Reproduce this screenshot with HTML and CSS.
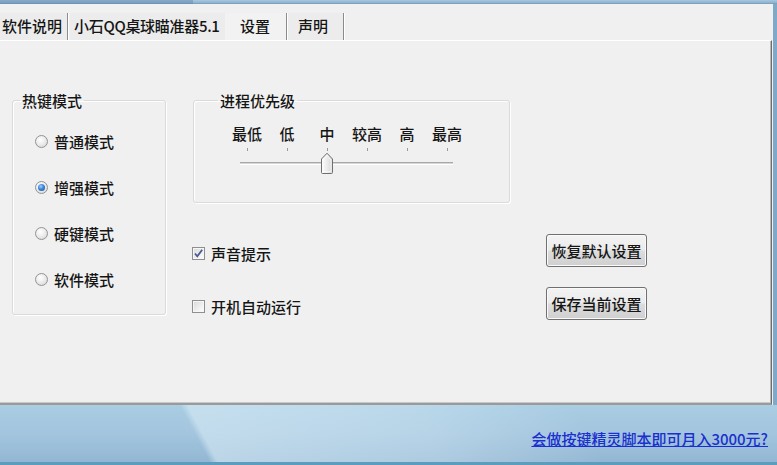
FILE: index.html
```html
<!DOCTYPE html>
<html>
<head>
<meta charset="utf-8">
<link rel="stylesheet" href="styles.css">
</head>
<body>
<div class="window">
  <div class="frame-top"></div>
  <div class="client">
    <div class="tabs">
      <div class="tab t1">软件说明</div>
      <div class="tab t2">小石QQ桌球瞄准器5.1</div>
      <div class="tab t3 active">设置</div>
      <div class="tab t4">声明</div>
    </div>
    <div class="panel">
      <fieldset class="group hotkey">
        <legend>热键模式</legend>
        <div class="radio"><span class="rb"></span>普通模式</div>
        <div class="radio"><span class="rb on"></span>增强模式</div>
        <div class="radio"><span class="rb"></span>硬键模式</div>
        <div class="radio"><span class="rb"></span>软件模式</div>
      </fieldset>
      <div class="right">
        <fieldset class="group priority">
          <legend>进程优先级</legend>
          <div class="scale">
            <div class="step"><span>最低</span><i></i></div>
            <div class="step"><span>低</span><i></i></div>
            <div class="step"><span>中</span><i></i></div>
            <div class="step"><span>较高</span><i></i></div>
            <div class="step"><span>高</span><i></i></div>
            <div class="step"><span>最高</span><i></i></div>
          </div>
          <div class="slider">
            <div class="track"></div>
            <svg class="thumb" width="14" height="23" viewBox="0 0 14 23">
              <defs>
                <linearGradient id="tg" x1="0" y1="0" x2="1" y2="0">
                  <stop offset="0" stop-color="#fbfbfb"/>
                  <stop offset="0.5" stop-color="#ececec"/>
                  <stop offset="1" stop-color="#d6d6d6"/>
                </linearGradient>
              </defs>
              <path d="M1.5 7 L7 1.2 L12.5 7 L12.5 20.5 Q12.5 21.5 11.5 21.5 L2.5 21.5 Q1.5 21.5 1.5 20.5 Z" fill="url(#tg)" stroke="#707070" stroke-width="1"/>
              <path d="M3 8 L7 3.5 L11 8 L11 19.8 L3 19.8 Z" fill="none" stroke="#ffffff" stroke-width="0.8" opacity="0.8"/>
            </svg>
          </div>
        </fieldset>
        <div class="options">
          <div class="check"><span class="cb on"><svg width="11" height="11" viewBox="0 0 11 11"><path d="M2 5.5 L4.3 8.3 L9.2 1.8" fill="none" stroke="#4a5a96" stroke-width="1.8"/></svg></span>声音提示</div>
          <button class="btn">恢复默认设置</button>
          <div class="check"><span class="cb"></span>开机自动运行</div>
          <button class="btn">保存当前设置</button>
        </div>
      </div>
    </div>
  </div>
  <div class="footer">
    <a class="ad" href="#">会做按键精灵脚本即可月入3000元?</a>
  </div>
</div>
</body>
</html>
```
FILE: styles.css
```css
html, body {
  margin: 0;
  padding: 0;
  width: 777px;
  height: 465px;
  overflow: hidden;
  background: #f0f0f0;
}

body {
  font-family: "Noto Sans CJK SC", "Liberation Sans", sans-serif;
  font-size: 15px;
  font-weight: 500;
  color: #151515;
}

.window {
  width: 777px;
  height: 465px;
  display: flex;
  flex-direction: column;
}

.frame-top {
  height: 4px;
  background:
    linear-gradient(90deg, rgba(80,120,160,0.35) 0, rgba(80,120,160,0.35) 193px, rgba(255,255,255,0) 193px),
    linear-gradient(180deg, #a9c6dc 0, #8fb2cf 70%, #6e96b8 100%);
}

.client {
  height: 401px;
  display: flex;
  flex-direction: column;
  background: #f0f0f0;
  border-right: 4px solid #80a9c8;
}

.tabs {
  margin-top: 9px;
  height: 27px;
  display: flex;
}

.tab {
  height: 27px;
  line-height: 26px;
  box-sizing: border-box;
  background: #ececec;
  white-space: nowrap;
  overflow: hidden;
}

.t1, .t3, .t4 {
  border-right: 1px solid #8c8c8c;
  box-shadow: 1px 0 0 #ffffff;
}

.t1 { width: 68px; padding-left: 2px; }
.t2 { width: 155px; padding-left: 4px; margin-left: 2px; letter-spacing: -0.3px; }
.t3 { width: 62px; padding-left: 15px; background: #f2f2f2; }
.t4 { width: 56px; padding-left: 10px; margin-left: 1px; }

.panel {
  flex: 1;
  display: flex;
  gap: 27px;
  box-sizing: border-box;
  padding: 51px 0 0 12px;
  margin-right: 1px;
  border-top: 1px solid #ffffff;
  border-right: 1px solid #6c6c6c;
  border-bottom: 2px solid #9a9a9a;
  box-shadow: inset -1px 0 0 #b8b8b8, inset 0 -1px 0 #c8c8c8;
}

.group {
  margin: 0;
  padding: 0;
  border: 1px solid #dadada;
  border-radius: 3px;
  box-shadow: inset 1px 1px 0 #ffffff, 1px 1px 0 #ffffff;
  box-sizing: border-box;
}

.group legend {
  padding: 0 2px;
  line-height: 17px;
  font-size: 15px;
}

.hotkey {
  width: 154px;
  height: 223px;
  padding-top: 9px;
}

.hotkey legend { margin-left: 7px; }

.radio {
  height: 46px;
  display: flex;
  align-items: center;
  padding-left: 22px;
  gap: 6px;
}

.rb {
  width: 11px;
  height: 11px;
  border-radius: 50%;
  border: 1px solid #939393;
  background: radial-gradient(circle at 40% 35%, #ffffff 0, #ededed 45%, #d2d2d2 100%);
  box-sizing: content-box;
  position: relative;
}

.rb.on::after {
  content: "";
  position: absolute;
  left: 2px;
  top: 2px;
  width: 7px;
  height: 7px;
  border-radius: 50%;
  background: radial-gradient(circle at 40% 35%, #9fd0ff 0, #3a86d8 45%, #1a4c8c 100%);
}

.right {
  display: flex;
  flex-direction: column;
}

.priority {
  width: 317px;
  height: 111px;
}

.priority legend { margin-left: 24px; }

.scale {
  display: flex;
  margin: 16px 0 0 33px;
}

.step {
  width: 40px;
  display: flex;
  flex-direction: column;
  align-items: center;
}

.step span {
  line-height: 18px;
  white-space: nowrap;
}

.step i {
  display: block;
  width: 1px;
  height: 3px;
  margin-top: 5px;
  background: #9a9a9a;
}

.slider {
  position: relative;
  margin: 11px 0 0 46px;
  width: 213px;
  height: 3px;
}

.track {
  height: 1px;
  border-top: 1px solid #a8a8a8;
  border-bottom: 1px solid #ffffff;
  background: #d6d6d6;
}

.thumb {
  position: absolute;
  left: 80px;
  top: -10px;
}

.options {
  margin-top: 31px;
  display: grid;
  grid-template-columns: 353px 101px;
  grid-template-rows: 33px 33px;
  row-gap: 20px;
  align-items: center;
}

.check {
  display: flex;
  align-items: center;
  gap: 6px;
  padding-top: 5px;
  margin-left: -1px;
}

.cb {
  width: 11px;
  height: 11px;
  border: 1px solid #8f8f8f;
  background: linear-gradient(135deg, #d8d8d8 0, #f4f4f4 70%, #ffffff 100%);
  box-shadow: inset 0 0 0 1px #f6f6f6;
  display: flex;
  align-items: center;
  justify-content: center;
}

.btn {
  width: 101px;
  height: 33px;
  padding: 0;
  font-family: "Noto Sans CJK SC", "Liberation Sans", sans-serif;
  font-size: 15px;
  font-weight: 500;
  color: #151515;
  border: 1px solid #707070;
  border-radius: 3px;
  background: linear-gradient(180deg, #f3f3f3 0, #ebebeb 48%, #dddddd 52%, #cfcfcf 100%);
  box-shadow: inset 0 0 0 1px #fafafa;
}

.footer {
  height: 60px;
  box-sizing: border-box;
  padding: 23px 9px 0 0;
  text-align: right;
  border-bottom: 3px solid #5c9cbd;
  background:
    linear-gradient(62deg, rgba(255,255,255,0) 0, rgba(255,255,255,0) 26%, rgba(220,238,248,0.55) 27%, rgba(220,238,248,0.35) 55%, rgba(255,255,255,0) 75%),
    linear-gradient(180deg, #a9cde3 0, #a3c5de 50%, #93b7d3 100%);
}

.ad {
  color: #1a2fcf;
  text-decoration: underline;
  font-size: 15px;
  line-height: 18px;
}
```
